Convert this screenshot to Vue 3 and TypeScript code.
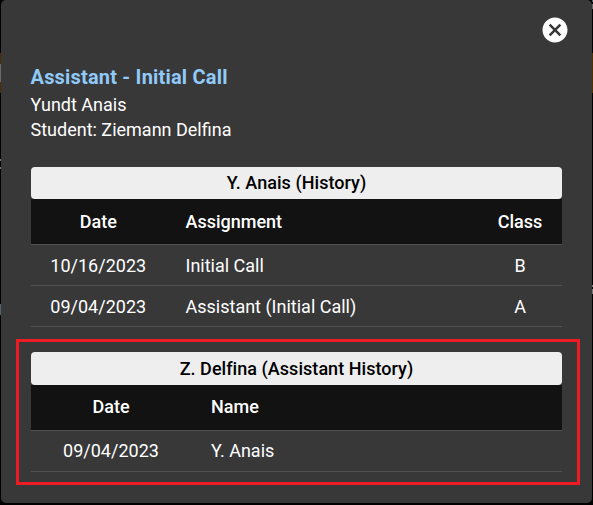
<script setup lang="ts">
interface Column {
  label: string
  align: 'center' | 'left'
}

interface HistoryTable {
  title: string
  kind: string
  columns: Column[]
  rows: string[][]
}

const studentHistory: HistoryTable = {
  title: 'Y. Anais (History)',
  kind: 'student',
  columns: [
    { label: 'Date', align: 'center' },
    { label: 'Assignment', align: 'left' },
    { label: 'Class', align: 'center' },
  ],
  rows: [
    ['10/16/2023', 'Initial Call', 'B'],
    ['09/04/2023', 'Assistant (Initial Call)', 'A'],
  ],
}

const assistantHistory: HistoryTable = {
  title: 'Z. Delfina (Assistant History)',
  kind: 'assistant',
  columns: [
    { label: 'Date', align: 'center' },
    { label: 'Name', align: 'left' },
  ],
  rows: [['09/04/2023', 'Y. Anais']],
}

const tables: HistoryTable[] = [studentHistory, assistantHistory]
</script>

<template>
  <div class="backdrop">
    <main class="dialog">
      <div class="toolbar">
        <button class="close" type="button" aria-label="Close">
          <svg viewBox="0 0 24 24" width="30" height="30">
            <path
              fill="#fff"
              d="M12 2C6.47 2 2 6.47 2 12s4.47 10 10 10 10-4.47 10-10S17.53 2 12 2zm5 13.59L15.59 17 12 13.41 8.41 17 7 15.59 10.59 12 7 8.41 8.41 7 12 10.59 15.59 7 17 8.41 13.41 12 17 15.59z"
            />
          </svg>
        </button>
      </div>
      <header class="intro">
        <h1>Assistant - Initial Call</h1>
        <p>Yundt Anais</p>
        <p>Student: Ziemann Delfina</p>
      </header>
      <section v-for="table in tables" :key="table.kind" :class="['history', table.kind]">
        <h2>{{ table.title }}</h2>
        <div class="row head">
          <span v-for="col in table.columns" :key="col.label" :class="col.align">{{ col.label }}</span>
        </div>
        <div v-for="(row, r) in table.rows" :key="r" class="row">
          <span v-for="(cell, c) in row" :key="c" :class="table.columns[c].align">{{ cell }}</span>
        </div>
      </section>
    </main>
  </div>
</template>

<style>
body {
  margin: 0;
  background: #000;
}
</style>

<style scoped>
.backdrop {
  box-sizing: border-box;
  width: 593px;
  height: 505px;
  padding: 0 1px 2px;
  overflow: hidden;
  font-family: Roboto, sans-serif;
  font-size: 18px;
  color: #fff;
  background:
    linear-gradient(#4c2e00 0 11px, #6b6b6b 11px 29px, #4c2e00 29px 40px) 0 53px / 1px 40px no-repeat,
    linear-gradient(#777 0 2px, #000 2px 8px, #777 8px 10px) 0 159px / 1px 10px no-repeat,
    linear-gradient(#50646d, #50646d) 0 304px / 1px 11px no-repeat,
    linear-gradient(#50646d 0 2px, #000 2px 4px, #666 4px 9px) 592px 0 / 1px 9px no-repeat,
    linear-gradient(#4c3000, #4c3000) 592px 53px / 1px 40px no-repeat,
    linear-gradient(#777 0 2px, #000 2px 4px, #777 4px 9px) 592px 285px / 1px 9px no-repeat,
    #000;
}

.dialog {
  box-sizing: border-box;
  height: 503px;
  padding: 15px 15px 0;
  border-radius: 5px;
  background: #383838;
}

.toolbar {
  display: flex;
  justify-content: flex-end;
  padding-right: 7px;
}

.close {
  display: flex;
  padding: 0;
  border: 0;
  background: none;
}

.intro {
  padding: 18px 15px 0 14.5px;
}

h1 {
  margin: 0;
  font-size: 20px;
  font-weight: 700;
  line-height: 29px;
  letter-spacing: 0.19px;
  color: #90caf9;
}

p {
  margin: 0;
  line-height: 25px;
}

.student {
  margin: 25px 15px 0;
}

.assistant {
  box-sizing: border-box;
  width: 564px;
  height: 146px;
  margin-top: 12px;
  padding: 10px 15px 0 12px;
  border: 3px solid #ed1c24;
}

h2 {
  height: 32px;
  margin: 0;
  border-radius: 4px;
  font-size: 18px;
  font-weight: 500;
  line-height: 31px;
  text-align: center;
  letter-spacing: 0.04px;
  color: #000;
  background: #eee;
}

.assistant h2 {
  height: 33px;
  line-height: 34px;
}

.row {
  display: grid;
  height: 40px;
  border-bottom: 1px solid #515151;
  line-height: 41px;
}

.student .row {
  grid-template-columns: 134.5px 1fr 84px;
}

.assistant .row {
  grid-template-columns: 160px 1fr;
  line-height: 39px;
}

.row.head {
  height: 45px;
  font-weight: 500;
  line-height: 45px;
  background: #121212;
}

.assistant .row.head {
  line-height: 43px;
}

.center {
  text-align: center;
}

.left {
  padding-left: 20px;
}
</style>
